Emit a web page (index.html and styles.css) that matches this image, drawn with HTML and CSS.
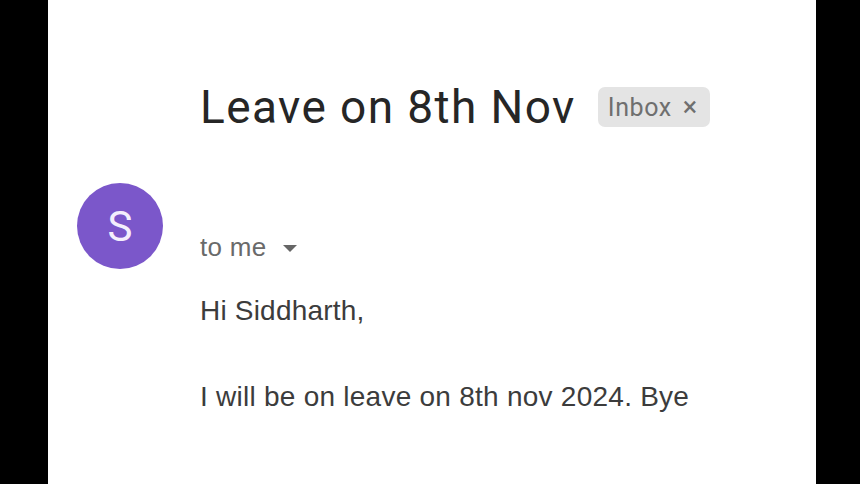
FILE: index.html
```html
<!DOCTYPE html>
<html>
<head>
<meta charset="utf-8">
<link rel="stylesheet" href="styles.css">
</head>
<body>
<div class="panel">
  <div class="mail">
    <div class="subject-row">
      <h1 class="subject">Leave on 8th Nov</h1>
      <span class="chip">Inbox <span class="chip-x">×</span></span>
    </div>
    <div class="avatar">S</div>
    <div class="content">
      <div class="recipient">to me <span class="caret"></span></div>
      <p class="greeting">Hi Siddharth,</p>
      <p class="body-text">I will be on leave on 8th nov 2024. Bye</p>
    </div>
  </div>
</div>
</body>
</html>
```

FILE: styles.css
```css
html, body {
  margin: 0;
  padding: 0;
  background: #000;
  height: 100%;
}
.panel {
  margin-left: 48px;
  width: 768px;
  height: 484px;
  background: #fff;
  box-sizing: border-box;
  padding: 84px 0 0 29px;
}
.mail {
  display: grid;
  grid-template-columns: 86px 1fr;
  column-gap: 37px;
  row-gap: 52px;
}
.subject-row {
  grid-column: 2;
  display: flex;
  align-items: center;
  gap: 22px;
  height: 46px;
}
.subject {
  margin: 0;
  font-family: Roboto, "Liberation Sans", sans-serif;
  font-weight: 400;
  font-size: 46px;
  line-height: 46px;
  color: #262626;
  letter-spacing: 1.4px;
}
.chip {
  display: inline-flex;
  align-items: center;
  height: 40px;
  padding: 0 12px 0 10px;
  box-sizing: border-box;
  background: #e4e4e4;
  border-radius: 7px;
  font-family: Roboto, "Liberation Sans", sans-serif;
  font-size: 25px;
  color: #6f6f6f;
  gap: 11px;
  letter-spacing: 0.6px;
}
.chip-x {
  font-size: 27px;
  line-height: 1;
}
.avatar {
  grid-column: 1;
  width: 86px;
  height: 86px;
  margin-top: 1px;
  border-radius: 50%;
  background: #7b57ca;
  color: #f4effd;
  display: flex;
  align-items: center;
  justify-content: center;
  font-family: Roboto, "Liberation Sans", sans-serif;
  font-size: 42px;
}
.content {
  grid-column: 2;
  padding-top: 50px;
  font-family: "Liberation Sans", Arial, sans-serif;
}
.recipient {
  font-size: 26px;
  line-height: 30px;
  color: #6a6a6a;
  display: flex;
  align-items: center;
  letter-spacing: 0.3px;
}
.caret {
  display: inline-block;
  margin-left: 16px;
  margin-top: 2px;
  width: 0;
  height: 0;
  border-left: 7px solid transparent;
  border-right: 7px solid transparent;
  border-top: 7px solid #666;
}
.greeting {
  margin: 33px 0 0;
  font-size: 28px;
  line-height: 32px;
  color: #3c3c3c;
  letter-spacing: 0.2px;
}
.body-text {
  margin: 54px 0 0;
  font-size: 28px;
  line-height: 32px;
  color: #3c3c3c;
  letter-spacing: 0.25px;
}
```
